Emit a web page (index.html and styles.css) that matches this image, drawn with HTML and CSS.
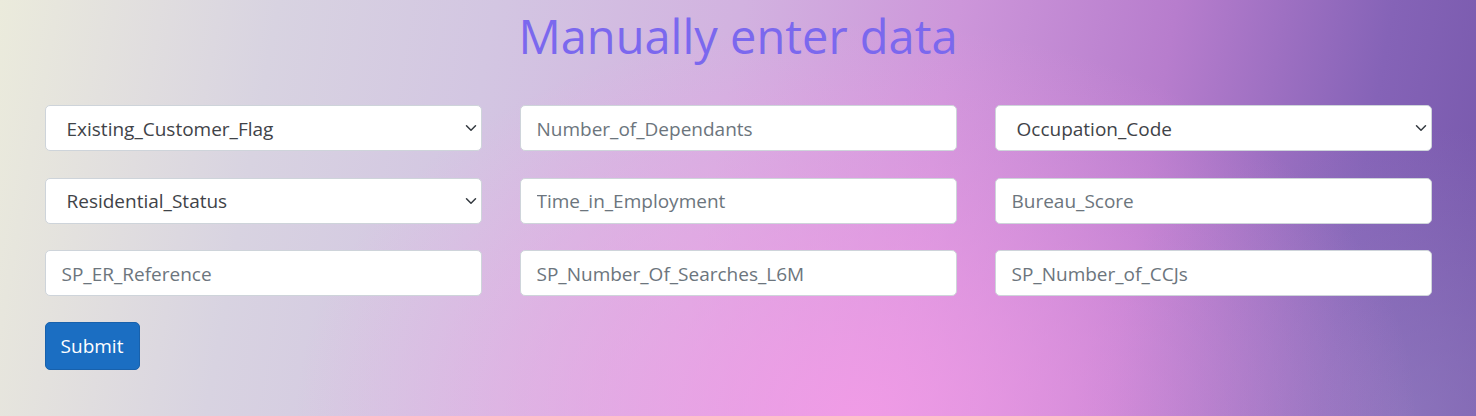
FILE: index.html
```html
<!DOCTYPE html>
<html lang="en">
<head>
<meta charset="utf-8">
<title>Manually enter data</title>
<link rel="stylesheet" href="styles.css">
</head>
<body>
<main class="page">
  <h1 class="title">Manually enter data</h1>
  <form class="data-form">
    <div class="fields">
      <div class="select-wrap">
        <select class="field field-select"><option>Existing_Customer_Flag</option></select>
        <svg class="chevron" viewBox="0 0 16 16" width="14" height="14" aria-hidden="true"><path d="M2 5l6 6 6-6" fill="none" stroke="#343a40" stroke-width="2" stroke-linecap="round" stroke-linejoin="round"/></svg>
      </div>
      <input class="field" type="text" placeholder="Number_of_Dependants">
      <div class="select-wrap">
        <select class="field field-select"><option>Occupation_Code</option></select>
        <svg class="chevron" viewBox="0 0 16 16" width="14" height="14" aria-hidden="true"><path d="M2 5l6 6 6-6" fill="none" stroke="#343a40" stroke-width="2" stroke-linecap="round" stroke-linejoin="round"/></svg>
      </div>
      <div class="select-wrap">
        <select class="field field-select"><option>Residential_Status</option></select>
        <svg class="chevron" viewBox="0 0 16 16" width="14" height="14" aria-hidden="true"><path d="M2 5l6 6 6-6" fill="none" stroke="#343a40" stroke-width="2" stroke-linecap="round" stroke-linejoin="round"/></svg>
      </div>
      <input class="field" type="text" placeholder="Time_in_Employment">
      <input class="field" type="text" placeholder="Bureau_Score">
      <input class="field" type="text" placeholder="SP_ER_Reference">
      <input class="field" type="text" placeholder="SP_Number_Of_Searches_L6M">
      <input class="field" type="text" placeholder="SP_Number_of_CCJs">
    </div>
    <button class="btn-submit" type="button">Submit</button>
  </form>
</main>
</body>
</html>
```
FILE: styles.css
```css
html, body {
  margin: 0;
  height: 100%;
}
body {
  font-family: "Open Sans", "Noto Sans", sans-serif;
  background:
    radial-gradient(ellipse 38% 95% at 58% 100%, rgba(246,156,232,0.85), rgba(246,156,232,0) 100%),
    radial-gradient(ellipse 22% 70% at 95% 100%, rgba(150,130,195,0.6), rgba(150,130,195,0) 100%),
    linear-gradient(100deg, #ebebdc 0%, #d8d3e1 18%, #d3c6e2 32%, #d2b2e0 48%, #cd96da 62%, #b77dcd 76%, #8563b7 90%, #7658ab 100%);
  overflow: hidden;
}
.page {
  width: 1387px;
  margin: 0 auto;
  padding-top: 8px;
}
.title {
  margin: 0;
  text-align: center;
  font-weight: 400;
  font-size: 47px;
  line-height: 1.2;
  color: #7b68ee;
}
.data-form {
  margin-top: 41px;
}
.fields {
  display: grid;
  grid-template-columns: repeat(3, 1fr);
  column-gap: 38px;
  row-gap: 26.5px;
}
.field {
  box-sizing: border-box;
  width: 100%;
  height: 46px;
  margin: 0;
  padding: 1px 16px 0;
  border: 1px solid #ced4da;
  border-radius: 5px;
  background: #fff;
  font-family: inherit;
  font-size: 19px;
  color: #212529;
  outline: none;
}
.field::placeholder {
  color: #6c757d;
  opacity: 1;
}
.select-wrap {
  position: relative;
}
.field-select {
  appearance: none;
  -webkit-appearance: none;
  padding-left: 21px;
  color: #3f4348;
}
.chevron {
  position: absolute;
  right: 5px;
  top: 17px;
  width: 12px;
  height: 12px;
  pointer-events: none;
}
.btn-submit {
  margin-top: 25.5px;
  width: 95px;
  height: 48px;
  padding: 0;
  border: 1px solid #1861ac;
  border-radius: 5px;
  background: #1b6ec2;
  color: #fff;
  font-family: inherit;
  font-size: 19px;
  cursor: pointer;
}
```
